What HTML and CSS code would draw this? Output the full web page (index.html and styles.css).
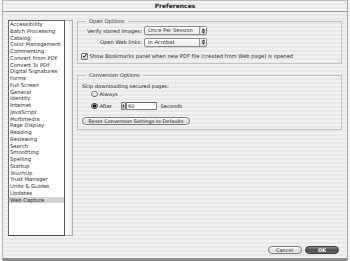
FILE: index.html
```html
<!DOCTYPE html>
<html>
<head>
<meta charset="utf-8">
<link rel="stylesheet" href="styles.css">
</head>
<body>
<div class="window">
  <div class="titlebar">Preferences</div>
  <div class="content">
    <div class="main">
      <div class="listwrap">
        <ul class="list">
          <li>Accessibility</li>
          <li>Batch Processing</li>
          <li>Catalog</li>
          <li>Color Management</li>
          <li>Commenting</li>
          <li>Convert From PDF</li>
          <li>Convert To PDF</li>
          <li>Digital Signatures</li>
          <li>Forms</li>
          <li>Full Screen</li>
          <li>General</li>
          <li>Identity</li>
          <li>Internet</li>
          <li>JavaScript</li>
          <li>Multimedia</li>
          <li>Page Display</li>
          <li>Reading</li>
          <li>Reviewing</li>
          <li>Search</li>
          <li>Smoothing</li>
          <li>Spelling</li>
          <li>Startup</li>
          <li>TouchUp</li>
          <li>Trust Manager</li>
          <li>Units &amp; Guides</li>
          <li>Updates</li>
          <li class="sel">Web Capture</li>
        </ul>
        <div class="scrollbar"></div>
      </div>
      <div class="panel">
        <fieldset class="group open">
          <legend>Open Options</legend>
          <div class="formgrid">
            <span class="lbl">Verify stored images:</span>
            <span class="popup"><span class="ptext">Once Per Session</span><span class="parrow"><svg viewBox="0 0 6 7" width="5" height="6"><path d="M3 0.5 L5.2 3 H0.8 Z M3 6.5 L5.2 4 H0.8 Z" fill="#222"/></svg></span></span>
            <span class="lbl">Open Web links:</span>
            <span class="popup"><span class="ptext">In Acrobat</span><span class="parrow"><svg viewBox="0 0 6 7" width="5" height="6"><path d="M3 0.5 L5.2 3 H0.8 Z M3 6.5 L5.2 4 H0.8 Z" fill="#222"/></svg></span></span>
          </div>
          <div class="checkrow">
            <span class="checkbox"><svg viewBox="0 0 8 8" width="8" height="8"><path d="M1.5 3.8 L3.3 6 L7.5 0.5" fill="none" stroke="#111" stroke-width="1.6"/></svg></span>
            <span>Show Bookmarks panel when new PDF file (created from Web page) is opened</span>
          </div>
        </fieldset>
        <fieldset class="group conv">
          <legend>Conversion Options</legend>
          <div class="skip">Skip downloading secured pages:</div>
          <div class="radiorow"><span class="radio"></span><span>Always</span></div>
          <div class="radiorow after"><span class="radio on"></span><span class="aftertext">After</span>
            <span class="stepper"><svg viewBox="0 0 5 8" width="5" height="8"><path d="M2.5 1 L4.3 3.4 H0.7 Z M2.5 7 L4.3 4.6 H0.7 Z" fill="#222"/></svg></span><span class="field">60</span><span class="secs">Seconds</span>
          </div>
          <div class="resetrow"><span class="btn reset">Reset Conversion Settings to Defaults</span></div>
        </fieldset>
      </div>
    </div>
    <div class="footer">
      <span class="btn cancel">Cancel</span>
      <span class="btn ok">OK</span>
    </div>
  </div>
  <div class="bottombar"></div>
</div>
</body>
</html>
```
FILE: styles.css
```css
* { box-sizing: border-box; }
html, body { margin: 0; padding: 0; background: #f4f4f4; }
body {
  width: 350px;
  height: 261px;
  overflow: hidden;
  font-family: "DejaVu Sans", "Liberation Sans", sans-serif;
  font-size: 5.2px;
  color: #2a2a2a;
}
.window {
  margin-left: 2px;
  width: 346px;
  height: 261px;
  display: flex;
  flex-direction: column;
  border-left: 1px solid #b4b4b4;
  border-right: 1px solid #a8a8a8;
  background: repeating-linear-gradient(to bottom, #f1f1f1 0 2px, #e8e8e8 2px 4px);
}
.titlebar {
  height: 12px;
  border-top: 1px solid #bdbdbd;
  border-bottom: 1px solid #9c9c9c;
  text-align: center;
  font-weight: bold;
  font-size: 6px;
  line-height: 10px;
  color: #222;
  background: repeating-linear-gradient(to bottom, #f3f3f3 0 2px, #eaeaea 2px 4px);
}
.content {
  flex: 1;
  display: flex;
  flex-direction: column;
  padding: 8px 8px 0 5px;
}
.main {
  display: flex;
  height: 216px;
}
.listwrap {
  display: flex;
  height: 216px;
}
.list {
  margin: 0;
  padding: 0;
  list-style: none;
  width: 57px;
  height: 216px;
  background: #fff;
  border: 1px solid #6a6a6a;
  border-right-color: #555;
  border-bottom-color: #444;
  font-size: 5.3px;
}
.list li {
  height: 6.76px;
  line-height: 6.76px;
  padding-left: 1px;
  white-space: nowrap;
  overflow: hidden;
}
.list li.sel { background: #d4d4d4; }
.scrollbar {
  width: 8px;
  height: 216px;
  border: 1px solid #b0b0b0;
  border-left: none;
  background: linear-gradient(to right, #f6f6f6, #ffffff 40%, #e6e6e6);
}
.panel {
  flex: 1;
  margin-left: 4px;
  margin-right: -3px;
  margin-top: -2px;
}
.group {
  margin: 0;
  padding: 0 4px;
  border: 1px solid #c2c2c2;
  min-width: 0;
}
.group legend {
  margin-left: 4px;
  padding: 0 3px;
  line-height: 6px;
  font-size: 5.2px;
  color: #333;
}
.open { height: 46px; }
.conv { height: 58px; margin-top: 8px; }
.formgrid {
  display: grid;
  grid-template-columns: 60px 63px;
  column-gap: 2px;
  row-gap: 2.5px;
  align-items: center;
  margin-top: 2px;
}
.lbl { text-align: right; white-space: nowrap; }
.popup {
  display: flex;
  height: 9px;
  border: 1px solid #8c8c8c;
  border-radius: 2px;
  background: linear-gradient(to bottom, #fdfdfd, #ececec);
  box-shadow: 0 0.5px 0 #bbb;
}
.ptext { flex: 1; padding-left: 3px; line-height: 7px; }
.parrow {
  width: 7px;
  border-left: 1px solid #999;
  background: linear-gradient(to bottom, #f8f8f8, #d6d6d6);
  display: flex;
  align-items: center;
  justify-content: center;
}
.checkrow {
  display: flex;
  align-items: center;
  gap: 1.5px;
  margin-top: 6px;
  margin-left: -1px;
  white-space: nowrap;
}
.checkbox {
  width: 7px;
  height: 7px;
  border: 1px solid #777;
  border-radius: 1px;
  background: linear-gradient(to bottom, #fafafa, #cfcfcf);
  display: flex;
  align-items: center;
  justify-content: center;
  overflow: visible;
}
.checkbox svg { margin-top: -1px; }
.skip { margin-top: 5px; line-height: 6px; }
.radiorow {
  display: flex;
  align-items: center;
  margin-left: 9px;
  margin-top: 1.5px;
  height: 7px;
}
.radiorow.after { margin-top: 4.5px; height: 8px; }
.radio {
  width: 6.5px;
  height: 6.5px;
  border-radius: 50%;
  border: 1px solid #777;
  background: linear-gradient(to bottom, #fafafa, #d8d8d8);
  margin-right: 2px;
}
.radio.on {
  background: radial-gradient(circle, #111 0 1.3px, #8a8a8a 1.6px, #c0c0c0 100%);
  border-color: #555;
}
.aftertext { width: 21px; }
.stepper {
  width: 5px;
  height: 8px;
  border: 1px solid #777;
  border-radius: 1px;
  background: linear-gradient(to bottom, #f0f0f0, #c8c8c8);
  display: flex;
  align-items: center;
  justify-content: center;
}
.field {
  width: 31px;
  height: 8px;
  border: 1px solid #888;
  border-top-color: #666;
  background: #fff;
  padding-left: 1.5px;
  line-height: 6px;
}
.secs { margin-left: 4px; }
.resetrow { margin-top: 7px; }
.btn {
  display: inline-flex;
  align-items: center;
  justify-content: center;
  height: 7.5px;
  border: 1px solid #7a7a7a;
  border-radius: 4px;
  background: linear-gradient(to bottom, #ffffff, #dcdcdc 60%, #ececec);
  font-size: 5px;
  white-space: nowrap;
}
.reset { width: 108px; }
.footer {
  display: flex;
  justify-content: flex-end;
  gap: 3.5px;
  margin-top: 10px;
}
.cancel { width: 34px; }
.ok {
  width: 34px;
  background: linear-gradient(to bottom, #8a8a8a, #4a4a4a 55%, #6a6a6a);
  border-color: #3a3a3a;
  color: #fff;
  font-weight: bold;
}
.bottombar {
  height: 3px;
  background: #8c8c8c;
  margin-top: auto;
}
```
